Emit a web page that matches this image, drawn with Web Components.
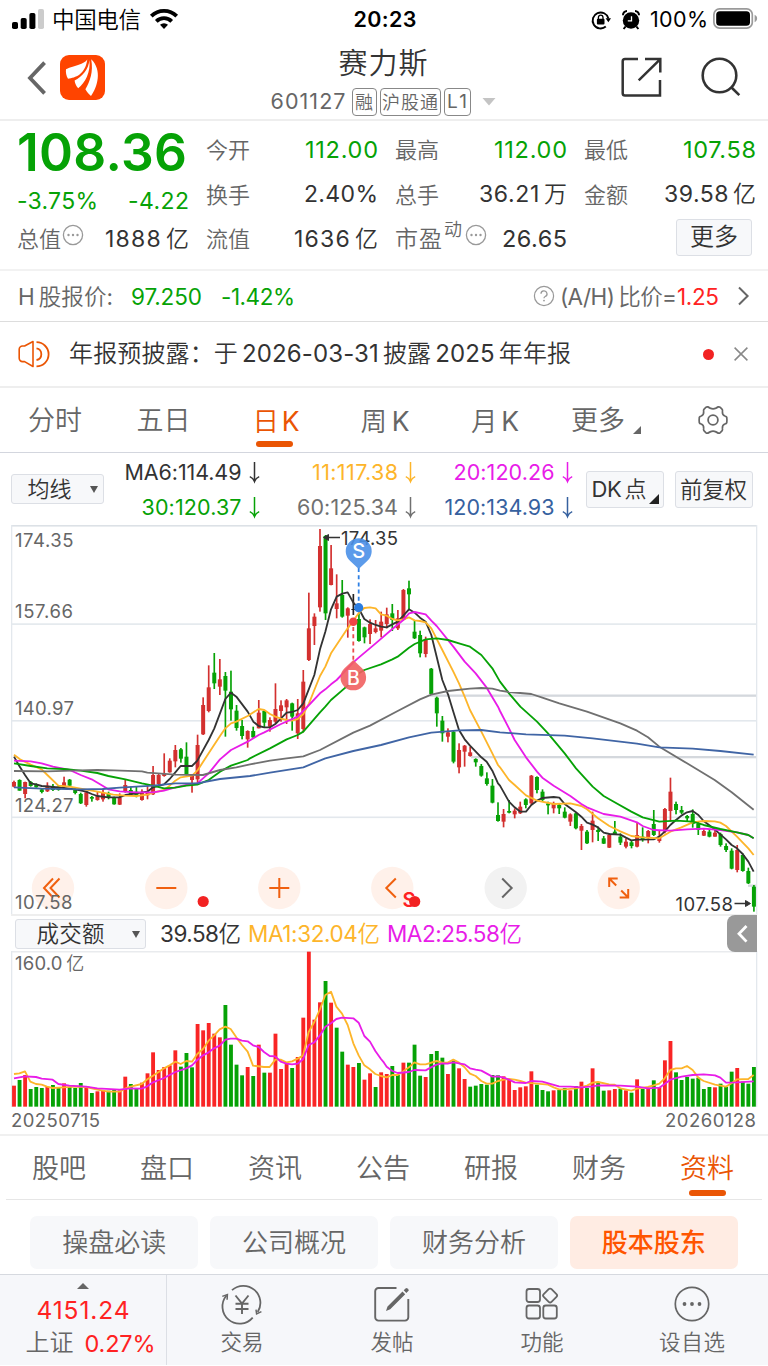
<!DOCTYPE html>
<html lang="zh-CN">
<head>
<meta charset="utf-8">
<title>赛力斯 601127</title>
<style>
  body {
    margin: 0;
    background: #fff;
    font-family: Inter, "Noto Sans CJK SC", sans-serif;
    color: #333;
  }
</style>
</head>
<body>
<stock-screen></stock-screen>

<script>
// One line of text, spaced out to a given width.
// Attributes: text, w (width in px), size, weight, gap (space between latin and han runs)
class FitText extends HTMLElement {
  constructor() {
    super();
    this.attachShadow({ mode: 'open' });
  }

  connectedCallback() {
    const size = this.getAttribute('size') || 22;
    const weight = this.getAttribute('weight') || 400;
    const gap = this.getAttribute('gap') || 0;
    const text = this.getAttribute('text');
    const runs = text.match(/[\u3000-\u9fff\uff00-\uffef]+|[^\u3000-\u9fff\uff00-\uffef]+/g);
    const han = weight > 400 ? weight : 350;
    const kind = r => /[\u3000-\u9fff]/.test(r) ? 'han' : /^[:=]/.test(r) ? 'tight' : 'latin';

    this.shadowRoot.innerHTML = `
      <style>
        :host {
          display: block;
          flex: none;
          line-height: 1.2;
          font-size: ${size}px;
          font-weight: ${weight};
        }
        .han { font-weight: ${han}; }
        span + span { margin-left: ${gap}px; }
        span + .tight { margin-left: 0; }
        b { display: inline-block; font-weight: inherit; white-space: pre; text-autospace: no-autospace; }
      </style>
      <b>${runs.map(r => `<span class="${kind(r)}">${r}</span>`).join('')}</b>
    `;

    const w = parseFloat(this.getAttribute('w'));
    if (w) {
      const natural = this.shadowRoot.querySelector('b').getBoundingClientRect().width;
      const spacing = (w - natural) / (text.length - 1 || 1);
      this.style.letterSpacing = spacing + 'px';
      this.style.width = w + 'px';
    }
  }
}
customElements.define('fit-text', FitText);


const ICONS = {
  signal: [32, 20, '<g><rect x="0" y="13" width="6" height="7" rx="1.8"/><rect x="8.7" y="9" width="6" height="11" rx="1.8"/><rect x="17.4" y="4" width="6" height="16" rx="1.8"/><rect x="26" y="0" width="6" height="20" rx="1.8" fill="#ccc"/></g>'],
  wifi: [28, 20, '<g fill="none" stroke="#000" stroke-width="3.8"><path d="M1.3 7.2a18 18 0 0 1 25.4 0"/><path d="M6.3 12.3a10.9 10.9 0 0 1 15.4 0"/></g><path d="M14 20l-4-4.2a5.8 5.8 0 0 1 8 0z"/>'],
  lock: [20, 20, '<path d="M14.8 16.6a8 8 0 1 1 2.6-8.2" fill="none" stroke="#000" stroke-width="1.9"/><path d="M14.6 8.3h5.4l-2.6 4z"/><rect x="5.9" y="8.8" width="7.6" height="5.6" rx="1"/><path d="M7.4 9V7.4a2.3 2.3 0 0 1 4.6 0V9" fill="none" stroke="#000" stroke-width="1.3"/>'],
  alarm: [18, 20, '<circle cx="9" cy="10.5" r="8.2"/><path d="M1 5.2A4 4 0 0 1 5 1M17 5.2A4 4 0 0 0 13 1" fill="none" stroke="#000" stroke-width="2"/><path d="M3.6 16.5L1.6 19M14.4 16.5l2 2.5" stroke="#000" stroke-width="2"/><path d="M9.5 6.2v4.7H5.8" fill="none" stroke="#fff" stroke-width="1.3"/>'],
  battery: [45, 21, '<rect x=".9" y=".9" width="38.4" height="19.2" rx="5.6" fill="none" stroke="#9a9a9a" stroke-width="1.7"/><rect x="3.2" y="3.2" width="33.8" height="14.6" rx="3.6"/><path d="M41.6 6.8c3.4 1.3 3.4 6 0 7.4z" fill="#9a9a9a"/>'],
  back: [20, 34, '<path d="M17.6 1.6L3 17l14.6 15.4" fill="none" stroke="#666" stroke-width="3.8"/>'],
  logo: [45, 45, '<rect width="45" height="45" rx="9" fill="#ff4400"/><g fill="#fff"><path d="M27.3 4.6C24 9.6 15 10.5 6 14.2C5.6 17.5 6.2 20.5 8 23.7C15.5 22.8 25 20 27.3 4.6z"/><path d="M29.3 5C29 14 22 21.5 14.6 25.6C15 28.6 16 31 18.2 33.3C25 28 31 17 29.3 5z"/><path d="M31.2 4.2C33.5 17 30 26 25.4 34.2C27 37 28.8 39 31 41C37.5 32 42.5 15 31.2 4.2z"/></g>'],
  share: [41, 41, '<g fill="none" stroke="#333" stroke-width="2.5"><path d="M17 2H4a2.3 2.3 0 0 0-2.3 2.3v32a2.3 2.3 0 0 0 2.3 2.3h35V23"/><path d="M24 2h15.3v13.5M38.8 2.6L17.7 23.4"/></g>'],
  search: [40, 40, '<g fill="none" stroke="#333" stroke-width="2.6"><circle cx="18.5" cy="18.5" r="16.8"/><path d="M30.5 30.5l7.8 7.6"/></g>'],
  caret: [14, 8, '<path d="M.5 0h13L7 7.5z" fill="#c4c4c4"/>'],
  info: [22, 22, '<circle cx="11" cy="11" r="9.6" fill="none" stroke="#999" stroke-width="1.3"/><g fill="#999"><circle cx="6.5" cy="11" r="1.2"/><circle cx="11" cy="11" r="1.2"/><circle cx="15.5" cy="11" r="1.2"/></g>'],
  help: [22, 22, '<circle cx="11" cy="11" r="9.6" fill="none" stroke="#999" stroke-width="1.2"/><path d="M8 8.8a3 2.9 0 1 1 4.2 2.7c-.9.4-1.2.9-1.2 1.8" fill="none" stroke="#999" stroke-width="1.3"/><circle cx="11" cy="15.6" r=".9" fill="#999"/>'],
  next: [14, 20, '<path d="M2 1.5l8.6 8.5L2 18.5" fill="none" stroke="#666" stroke-width="2"/>'],
  speaker: [32, 28, '<g fill="none" stroke="#ea5504" stroke-width="1.6" stroke-linejoin="round"><path d="M15 1.5L6.6 6H4.5a3.3 3.3 0 0 0-3.3 3.3v9a3.3 3.3 0 0 0 3.3 3.3h2.1L15 26.5z"/><path d="M18.5 2.2a12 12 0 0 1 0 24.2M18.5 8.4a5.9 5.9 0 0 1 0 11.6" stroke-width="1.8"/></g>'],
  close: [14, 14, '<path d="M.6.6l12.8 12.8M13.4.6L.6 13.4" stroke="#888" stroke-width="1.5"/>'],
  gear: [32, 30, '<g fill="none" stroke="#666" stroke-width="1.8"><circle cx="16" cy="15" r="4.9"/><path stroke-linejoin="round" transform="translate(1 .3) scale(.94 .98)" d="M10.5 1.6l2.4 1.3q3.1 1.5 6.2 0l2.4-1.3q1.2-.3 2.2.6l2 1.9q.6.9.3 2.3-.4 3.4 2.6 4.5 1.7.5 2 1.4.4 2.7 0 5.4-.3.9-2 1.4-3 1.1-2.6 4.5.3 1.4-.3 2.3l-2 1.9q-1 .9-2.2.6l-2.4-1.3q-3.1-1.5-6.2 0l-2.4 1.3q-1.2.3-2.2-.6l-2-1.9q-.6-.9-.3-2.3.4-3.4-2.6-4.5-1.7-.5-2-1.4-.4-2.7 0-5.4.3-.9 2-1.4 3-1.1 2.6-4.5-.3-1.4.3-2.3l2-1.9q1-.9 2.2-.6z"/></g>'],
  down: [11, 21, '<path d="M5.5 0v20M.8 14.6q3.4 1.4 4.7 5 1.3-3.6 4.7-5" fill="none" stroke="currentColor" stroke-width="1.5"/>'],
  trade: [42, 38, '<g fill="none" stroke="#666" stroke-width="1.8"><path d="M11 5.2A17 17 0 0 1 36.7 27"/><path d="M31.7 32.6A17 17 0 0 1 5.5 10.5"/><path d="M35 24.6l.6 4.3 4.8-2.3M1.3 11.4l5.1-1.9-.3 5.2" stroke-width="1.5"/><path d="M14.5 10.5l6.5 8 6.5-8M21 18.5v10.5M14.5 18.7h13M14.5 24h13" stroke-width="1.9"/></g>'],
  post: [38, 38, '<path d="M23.5 3H5.5A3.3 3.3 0 0 0 2.2 6.3v26a3.3 3.3 0 0 0 3.3 3.3h26.5a3.3 3.3 0 0 0 3.3-3.3V14" fill="none" stroke="#666" stroke-width="1.9"/><path d="M14.5 21.5L29.5 6.5l2.7 2.7-15 15-4.2 1.8zM30.7 5.3l2.4-2.2q2.7.2 2.7 2.5l-2.5 2.5z" fill="#666"/>'],
  apps: [34, 34, '<g fill="none" stroke="#666" stroke-width="1.8"><rect x="1.5" y="2" width="13.5" height="13" rx="2.5"/><rect x="1.5" y="18.5" width="13.5" height="13" rx="2.5"/><rect x="18.3" y="18.5" width="13.5" height="13" rx="2.5"/><rect x="19.6" y="3" width="11" height="11" rx="2" transform="rotate(45 25.1 8.5)"/></g>'],
  more: [38, 38, '<circle cx="19" cy="19" r="16.7" fill="none" stroke="#666" stroke-width="1.7"/><g fill="#666"><circle cx="11.5" cy="19" r="1.9"/><circle cx="19" cy="19" r="1.9"/><circle cx="26.5" cy="19" r="1.9"/></g>']
};

class UiIcon extends HTMLElement {
  constructor() {
    super();
    this.attachShadow({ mode: 'open' });
  }

  connectedCallback() {
    const [w, h, body] = ICONS[this.getAttribute('name')];
    this.shadowRoot.innerHTML = `
      <style>
        :host { display: block; flex: none; width: ${w}px; height: ${h}px; }
        svg { display: block; overflow: visible; }
      </style>
      <svg width="${w}" height="${h}" viewBox="0 0 ${w} ${h}">${body}</svg>
    `;
  }
}
customElements.define('ui-icon', UiIcon);


// Grey outlined button; corner="fold" or corner="drop" adds the menu triangle
class ChipButton extends HTMLElement {
  constructor() {
    super();
    this.attachShadow({ mode: 'open' });
    this.shadowRoot.innerHTML = `
      <style>
        :host {
          display: flex;
          flex: none;
          align-items: center;
          justify-content: center;
          position: relative;
          box-sizing: border-box;
          border: 1px solid #dcdfe5;
          border-radius: 3px;
          background: #f7f8fa;
          color: #333;
        }
        i { display: none; position: absolute; width: 0; height: 0; }
        :host([corner=drop]) i {
          display: block;
          right: 5px;
          top: 11px;
          border: 4.5px solid transparent;
          border-top: 7px solid #555;
          border-bottom: 0;
        }
        :host([corner=fold]) i {
          display: block;
          right: 4px;
          bottom: 3px;
          border-left: 10px solid transparent;
          border-bottom: 10px solid #222;
        }
      </style>
      <slot></slot><i></i>
    `;
  }
}
customElements.define('chip-button', ChipButton);


class StatusBar extends HTMLElement {
  constructor() {
    super();
    this.attachShadow({ mode: 'open' });
    this.shadowRoot.innerHTML = `
      <style>
        :host {
          display: grid;
          grid-template-columns: 1fr auto 1fr;
          align-items: center;
          height: 38px;
          padding: 2px 10px 0 12px;
          box-sizing: border-box;
          color: #000;
        }
        div { display: flex; align-items: center; }
        .right { justify-content: flex-end; }
      </style>
      <div>
        <ui-icon name="signal" style="margin-top:-2px"></ui-icon>
        <fit-text text="中国电信" w="89" size="22.5" style="margin:-1px 9px 0 8px"></fit-text>
        <ui-icon name="wifi" style="margin-top:-2px"></ui-icon>
      </div>
      <fit-text text="20:23" w="63" size="21.5" weight="600"></fit-text>
      <div class="right">
        <ui-icon name="lock"></ui-icon>
        <ui-icon name="alarm" style="margin:0 10px 0 11px"></ui-icon>
        <fit-text text="100%" w="58" size="21.5" style="margin-right:5px"></fit-text>
        <ui-icon name="battery" style="margin-top:-2px"></ui-icon>
      </div>
    `;
  }
}
customElements.define('status-bar', StatusBar);


class StockHeader extends HTMLElement {
  constructor() {
    super();
    this.attachShadow({ mode: 'open' });
    this.shadowRoot.innerHTML = `
      <style>
        :host {
          display: grid;
          grid-template-columns: 1fr auto 1fr;
          height: 83px;
          box-sizing: border-box;
          border-bottom: 2px solid #eee;
        }
        .left, .right, .sub { display: flex; align-items: center; }
        .left { padding: 0 0 2px 27px; gap: 13px; }
        .right { justify-content: flex-end; gap: 39px; padding: 0 27px 3px 0; }
        .mid { display: flex; flex-direction: column; align-items: center; padding: 9px 2px 0 0; }
        .sub { color: #666; margin-top: 6px; height: 29px; }
        .tag {
          display: flex;
          align-items: center;
          justify-content: center;
          height: 28px;
          box-sizing: border-box;
          border: 1px solid #888;
          border-radius: 4px;
          margin-left: 3px;
        }
      </style>
      <div class="left">
        <ui-icon name="back"></ui-icon>
        <ui-icon name="logo"></ui-icon>
      </div>
      <div class="mid">
        <fit-text text="赛力斯" w="89" size="29"></fit-text>
        <div class="sub">
          <fit-text text="601127" w="75" size="21.5"></fit-text>
          <div class="tag" style="width:25px;margin-left:6px"><fit-text text="融" size="18"></fit-text></div>
          <div class="tag" style="width:61px"><fit-text text="沪股通" w="56" size="18"></fit-text></div>
          <div class="tag" style="width:27px"><fit-text text="L1" w="20" size="19"></fit-text></div>
          <ui-icon name="caret" style="margin-left:11px"></ui-icon>
        </div>
      </div>
      <div class="right">
        <ui-icon name="share"></ui-icon>
        <ui-icon name="search"></ui-icon>
      </div>
    `;
  }
}
customElements.define('stock-header', StockHeader);


class QuotePanel extends HTMLElement {
  constructor() {
    super();
    this.attachShadow({ mode: 'open' });
    this.shadowRoot.innerHTML = `
      <style>
        :host {
          display: flex;
          height: 150px;
          box-sizing: border-box;
          border-bottom: 2px solid #f2f2f2;
          padding: 7px 12px 0 17px;
          --down: #06a206;
        }
        .main { width: 172px; margin-right: 17px; display: grid; grid-template-rows: 50px 47px 29px; }
        .grid { display: grid; grid-template-columns: repeat(3, 172px); grid-template-rows: 44px 46px 43px; column-gap: 17px; }
        .cell, .main > div { display: flex; align-items: center; justify-content: space-between; }
        .cell > :first-child, .label { color: #666; }
        .cell > .green, .green { color: var(--down); }
        .pair { display: flex; align-items: center; }
      </style>
      <div class="main">
        <div class="green"><fit-text text="108.36" w="170" size="51.5" weight="600"></fit-text></div>
        <div class="green">
          <fit-text text="-3.75%" w="81" size="23"></fit-text>
          <fit-text text="-4.22" w="61" size="23"></fit-text>
        </div>
        <div>
          <span class="pair label"><fit-text text="总值" w="44" size="22"></fit-text><ui-icon name="info" style="margin:-9px 0 0 1px"></ui-icon></span>
          <fit-text text="1888亿" w="84" size="23" gap="4"></fit-text>
        </div>
      </div>
      <div class="grid">
        <div class="cell"><fit-text text="今开" w="44" size="22"></fit-text><fit-text class="green" text="112.00" w="73" size="23.5"></fit-text></div>
        <div class="cell"><fit-text text="最高" w="44" size="22"></fit-text><fit-text class="green" text="112.00" w="73" size="23.5"></fit-text></div>
        <div class="cell"><fit-text text="最低" w="44" size="22"></fit-text><fit-text class="green" text="107.58" w="73" size="23.5"></fit-text></div>
        <div class="cell"><fit-text text="换手" w="44" size="22"></fit-text><fit-text text="2.40%" w="74" size="23"></fit-text></div>
        <div class="cell"><fit-text text="总手" w="44" size="22"></fit-text><fit-text text="36.21万" w="88" size="23" gap="4"></fit-text></div>
        <div class="cell"><fit-text text="金额" w="44" size="22"></fit-text><fit-text text="39.58亿" w="92" size="23" gap="4"></fit-text></div>
        <div class="cell"><fit-text text="流值" w="44" size="22"></fit-text><fit-text text="1636亿" w="84" size="23" gap="4"></fit-text></div>
        <div class="cell">
          <span class="pair">
            <fit-text text="市盈" w="47" size="23"></fit-text>
            <fit-text text="动" size="18" style="margin:-20px 0 0 2px"></fit-text>
            <ui-icon name="info" style="margin:-9px 0 0 3px"></ui-icon>
          </span>
          <fit-text text="26.65" w="65" size="23.5"></fit-text>
        </div>
        <div class="cell" style="justify-content:flex-end">
          <chip-button style="width:76px;height:37px;margin:-5px 4px 0 0;color:#333"><fit-text text="更多" w="48" size="24"></fit-text></chip-button>
        </div>
      </div>
    `;
  }
}
customElements.define('quote-panel', QuotePanel);


class HShareRow extends HTMLElement {
  constructor() {
    super();
    this.attachShadow({ mode: 'open' });
    this.shadowRoot.innerHTML = `
      <style>
        :host {
          display: flex;
          align-items: center;
          height: 51px;
          box-sizing: border-box;
          border-bottom: 1px solid #ddd;
          padding: 0 17px 0 18px;
          color: #666;
        }
        .green { color: #06a206; }
        .red { color: #f22; }
      </style>
      <fit-text text="H股报价:" w="95" size="22.5" gap="4"></fit-text>
      <fit-text class="green" text="97.250" w="71" size="22.5" style="margin-left:18px"></fit-text>
      <fit-text class="green" text="-1.42%" w="74" size="22.5" style="margin-left:19px"></fit-text>
      <ui-icon name="help" style="margin-left:auto"></ui-icon>
      <fit-text text="(A/H)比价=" w="117" size="22.5" gap="4" style="margin-left:5px"></fit-text>
      <fit-text class="red" text="1.25" w="42" size="22.5"></fit-text>
      <ui-icon name="next" style="margin-left:18px"></ui-icon>
    `;
  }
}
customElements.define('h-share-row', HShareRow);


class NoticeRow extends HTMLElement {
  constructor() {
    super();
    this.attachShadow({ mode: 'open' });
    this.shadowRoot.innerHTML = `
      <style>
        :host {
          display: flex;
          align-items: center;
          height: 66px;
          box-sizing: border-box;
          border-bottom: 2px solid #eee;
          padding: 0 20px 0 18px;
        }
        .dot { width: 11px; height: 11px; border-radius: 50%; background: #f22222; margin: 0 20px 0 auto; }
      </style>
      <ui-icon name="speaker"></ui-icon>
      <fit-text text="年报预披露：于2026-03-31披露2025年年报" w="502" size="24" gap="4" style="margin-left:19px"></fit-text>
      <span class="dot"></span>
      <ui-icon name="close"></ui-icon>
    `;
  }
}
customElements.define('notice-row', NoticeRow);


class TabItem extends HTMLElement {
  constructor() {
    super();
    this.attachShadow({ mode: 'open' });
    this.shadowRoot.innerHTML = `
      <style>
        :host {
          display: flex;
          align-items: center;
          justify-content: center;
          position: relative;
          box-sizing: border-box;
          padding-top: 3px;
          color: #666;
        }
        :host([active]) { color: #ea5504; }
        :host([active])::after {
          content: '';
          position: absolute;
          left: 50%;
          bottom: var(--bar-bottom, 5px);
          width: 37px;
          height: 6px;
          margin-left: -19px;
          border-radius: 3px;
          background: #ea5504;
        }
      </style>
      <slot></slot>
    `;
  }
}
customElements.define('tab-item', TabItem);


class PeriodTabs extends HTMLElement {
  constructor() {
    super();
    this.attachShadow({ mode: 'open' });
    this.shadowRoot.innerHTML = `
      <style>
        :host {
          display: grid;
          grid-template-columns: repeat(5, 110px) 106px 112px;
          height: 65px;
          box-sizing: border-box;
          border-bottom: 1px solid #d3d6de;
        }
        i { border-left: 8px solid transparent; border-bottom: 8px solid #666; margin: 16px 0 0 8px; }
      </style>
      <tab-item><fit-text text="分时" w="54" size="27"></fit-text></tab-item>
      <tab-item style="padding-right:3px"><fit-text text="五日" w="54" size="27"></fit-text></tab-item>
      <tab-item active><fit-text text="日K" w="47" size="26.5" gap="2" style="margin-left:2px"></fit-text></tab-item>
      <tab-item><fit-text text="周K" w="49" size="26.5" gap="3"></fit-text></tab-item>
      <tab-item><fit-text text="月K" w="48" size="26.5" gap="3"></fit-text></tab-item>
      <tab-item style="padding-left:6px"><fit-text text="更多" w="54" size="27"></fit-text><i></i></tab-item>
      <tab-item style="padding:0 0 1px 2px"><ui-icon name="gear"></ui-icon></tab-item>
    `;
  }
}
customElements.define('period-tabs', PeriodTabs);


class MaLegend extends HTMLElement {
  constructor() {
    super();
    this.attachShadow({ mode: 'open' });
    const items = [
      ['MA6:114.49', 117, '#333'], ['11:117.38', 86, '#fdb52a'], ['20:120.26', 101, '#e81ce8'],
      ['30:120.37', 100, '#06a206'], ['60:125.34', 101, '#707070'], ['120:134.93', 110, '#36619f']
    ];
    this.shadowRoot.innerHTML = `
      <style>
        :host { display: flex; height: 67px; padding: 0 11px; box-sizing: border-box; }
        .values {
          display: grid;
          grid-template-columns: repeat(3, 156.5px);
          grid-auto-rows: 35px;
          margin: 2px 13px 0 -1px;
        }
        .values div { display: flex; align-items: center; justify-content: flex-end; gap: 7px; }
      </style>
      <chip-button corner="drop" style="width:93px;height:30px;margin-top:21px;padding-right:16px"><fit-text text="均线" w="44" size="22"></fit-text></chip-button>
      <div class="values">
        ${items.map(([text, w, color]) => `<div style="color:${color}"><fit-text text="${text}" w="${w}" size="21.5"></fit-text><ui-icon name="down"></ui-icon></div>`).join('')}
      </div>
      <chip-button corner="fold" style="width:78px;height:37px;margin-top:18px;padding-right:13px"><fit-text text="DK点" w="55" size="22" gap="3" style="margin-left:2px"></fit-text></chip-button>
      <chip-button style="width:78px;height:37px;margin:18px 0 0 11px"><fit-text text="前复权" w="67" size="22.5"></fit-text></chip-button>
    `;
  }
}
customElements.define('ma-legend', MaLegend);


// Both charts are drawn in thirds of a pixel
const STEP = 16.69;
const FIRST = 42;
const RED = '#d3302f';
const GREEN = '#06a206';

// chunks: [x offset, 'x,y x,y ...']
function line(color, chunks) {
  const points = chunks.map(([dx, pts]) => pts.split(' ').map(p => {
    const [x, y] = p.split(',');
    return (+x + dx) + ',' + y;
  }).join(' ')).join(' ');
  return `<polyline points="${points}" fill="none" stroke="${color}" stroke-width="5.5" stroke-linejoin="round"/>`;
}

// colour, wick top, wick bottom, body top, body bottom
const CANDLES = `r 782 802 786 800|g 778 812 780 812|r 785 835 786 822|g 783 800 786 798|g 790 803 793 802|g 805 820 808 816
r 787 816 797 814|g 792 813 800 810|g 795 812 800 810|r 770 802 787 800|g 777 800 779 797|g 803 823 806 819
g 818 852 822 850|r 813 860 817 855|g 828 845 831 836|r 815 842 828 840|r 805 845 818 838|g 815 838 820 832
g 830 854 833 853|r 820 855 833 854|r 778 818 795 816|g 800 824 810 822|g 800 832 815 826|r 808 842 818 840
r 797 838 818 826|r 738 825 765 823|r 760 797 765 792|r 700 770 762 768|r 715 758 722 757|r 675 742 690 724
g 684 728 688 716|g 667 766 710 764|r 765 818 768 780|r 644 790 675 778|r 532 645 555 643|r 436 577 502 573
g 399 507 458 490|r 417 525 478 500|g 456 650 468 512|g 452 602 515 568|g 555 632 572 624|g 600 658 618 648
r 631 683 633 658|g 620 655 633 652|r 540 625 578 625|g 570 622 573 608|r 592 635 600 620|r 490 610 567 605
r 541 605 556 573|r 537 612 541 562|g 548 632 550 590|r 537 657 580 640|r 450 637 485 627|r 218 423 325 420
r 280 375 290 318|r 27 275 78 262|g 45 300 48 280|r 75 196 145 195|r 163 295 250 267|g 180 293 225 290
r 262 353 265 287|k 222 285 267 270|g 280 365 297 363|g 320 370 322 352|r 298 372 312 342|r 300 340 325 336
r 275 352 305 332|r 263 325 283 312|g 252 333 280 300|r 270 330 295 325|r 207 302 210 300|g 182 268 205 223
g 300 357 335 355|g 332 412 345 400|r 350 412 358 402|g 444 524 446 522|g 530 620 533 580|g 588 665 602 640
r 625 667 637 650|g 632 730 635 725|r 670 760 690 742|r 675 740 677 695|r 680 710 697 708|g 715 740 717 727
g 732 770 738 767|g 757 797 775 792|g 777 850 797 848|g 847 905 885 903|r 867 922 882 905|g 840 880 873 878
r 865 895 872 883|r 845 882 860 880|g 835 865 838 855|r 765 855 767 850|g 769 820 771 810|g 808 845 815 840
g 845 883 850 856|r 845 880 850 865|g 850 882 855 865|g 862 895 875 893|r 880 918 883 905|g 878 928 880 925
r 912 990 918 932|g 930 972 935 970|r 875 967 902 930|g 920 963 930 936|g 948 972 955 971|r 940 984 945 983
g 903 945 935 942|g 940 975 950 968|r 955 985 965 980|g 962 985 967 978|r 908 982 945 980|g 922 965 950 957
r 930 970 933 955|g 870 948 912 945|r 930 968 950 963|r 864 940 867 935|r 773 905 815 873|g 845 883 852 870
g 858 882 870 878|g 885 905 888 895|g 868 923 882 912|g 905 945 912 930|r 928 948 933 947|g 928 952 935 950
r 925 950 938 950|g 938 980 942 975|g 970 996 978 990|g 985 1048 992 1046|r 975 1057 990 1050|g 1000 1055 1005 1053
g 1043 1092 1053 1090|g 1095 1175 1100 1160`.split(/[|\n]/);

const MA_LINES = [
  ['#333', [
    [0, '42,710 58,738 75,765 92,790 108,793 125,798 159,801 192,804 225,808 259,815 275,822 292,828 325,832 359,832 376,825 409,820 442,815 459,802 492,793 509,777 526,757 542,738 576,738 592,722 626,660 643,625 660,580 676,537 693,518 709,530 743,575 760,605'],
    [750, '26,618 43,622 60,622 76,612 93,595 110,578 126,576 143,570 160,550 193,465 210,388 226,335 243,268 260,230 277,221 293,217 310,248 327,267 343,297 360,308 377,315 393,320 410,322 427,313 443,305 460,287 477,268 494,278 510,293 527,305 544,345 560,410 577,480 594,523 610,575 627,630 644,658 660,677 694,712 710,725 727,752 744,790'],
    [1500, '0,797 27,845 44,862 61,875 78,875 94,855 111,842 127,834 161,831 178,833 194,852 228,877 244,890 261,908 278,914 294,922 311,938 328,942 361,944 378,953 394,961 411,959 461,958 478,950 494,935 511,915 528,900 544,887 561,877 578,873 594,884 611,903 644,928 678,958 695,975 711,985 728,1002 745,1025 761,1055']
  ]],
  ['#fdb52a', [
    [0, '42,704 60,718 92,734 125,748 142,765 175,797 209,800 242,806 292,815 340,824 376,827 409,828 442,824 459,818 492,810 509,797 526,782 542,772 576,767 592,752 626,700 660,648 676,625 693,610 709,605 743,588'],
    [750, '26,567 43,570 60,582 76,590 93,596 110,600 126,602 143,597 160,582 177,550 193,510 210,468 226,440 243,400 293,325 310,302 327,278 343,264 360,262 377,265 393,283 410,287 427,297 443,301 460,298 477,292 494,301 510,303 527,307 544,325 577,390 610,455 627,490 644,530 660,570 694,635 727,700 744,735'],
    [1500, '0,742 27,780 44,795 78,826 111,842 161,852 211,850 244,858 261,868 294,895 328,918 361,934 394,948 428,952 478,955 511,935 544,922 578,907 611,903 644,904 661,908 678,918 711,950 745,985 761,1005']
  ]],
  ['#e81ce8', [
    [0, '42,722 92,724 125,730 159,740 209,750 242,765 275,778 309,798 325,808 359,814 409,817 459,817 492,812 526,802 559,795 592,790 626,760 660,718 693,690 743,665'],
    [750, '26,645 43,637 93,612 143,590 177,555 210,520 226,508 243,493 260,480 310,427 327,412 377,370 427,327 460,300 477,280 494,276 527,283 544,302 560,318 610,380 644,425 677,460 710,503 744,560'],
    [1500, '0,573 27,625 44,660 78,712 111,755 127,773 161,797 211,828 244,852 261,862 311,882 361,890 411,907 428,918 461,930 511,932 561,928 611,926 661,930 711,937 745,945 761,955']
  ]],
  ['#06a206', [
    [0, '42,730 92,738 142,745 192,747 242,752 292,759 325,768 376,778 426,790 459,797 492,805 526,803 559,797 592,794 626,780 660,755 693,737 743,720'],
    [750, '0,715 60,685 110,658 143,645 160,635 210,577 226,560 243,540 293,497 327,460 343,450 393,433 427,418 443,410 477,383 494,372 527,358 560,355 594,360 627,370 660,380 694,405 727,445'],
    [1500, '0,485 27,520 61,560 111,605 144,640 194,700 228,745 278,800 311,828 344,847 394,875 428,892 478,905 528,902 578,905 611,915 661,927 711,937 745,945 761,955']
  ]],
  ['#707070', [
    [0, '42,753 142,754 242,751 292,750 342,751 426,754 442,758 526,764 609,765 660,750 709,742'],
    [750, '0,733 60,722 110,715 160,709 210,690 310,638 360,617 443,573 510,538 544,524 594,513 660,506 694,504 727,506'],
    [1500, '0,512 27,516 94,522 127,533 178,550 261,575 361,610 411,632 444,652 478,680 561,730 644,780 695,817 761,869']
  ]],
  ['#4065a5', [
    [0, '42,802 125,806 242,808 309,807 359,803 459,797 526,790 592,790 660,777'],
    [750, '0,768 60,758 160,742 226,715 310,693 393,675 477,652 544,638 627,631 694,630'],
    [1500, '0,637 78,643 194,647 278,655 411,671 478,682 578,686 661,693 761,704']
  ]]
];

class KChart extends HTMLElement {
  constructor() {
    super();
    this.attachShadow({ mode: 'open' });
    this.shadowRoot.innerHTML = `
      <style>
        :host { display: block; height: 396px; }
        svg { display: block; }
        text { font-size: 18.5px; fill: #666; }
        .mark { fill: #333; }
        .btn { fill: none; stroke: #f0600f; stroke-width: 2; }
      </style>
      <svg width="768" height="396" viewBox="0 0 768 396">
        <g fill="#e3e8ed">
          <rect x="11" y="5" width="746" height="1.6" fill="#dce1e6"/>
          <rect x="11" y="5" width="1.3" height="390"/>
          <rect x="756" y="5" width="1.3" height="390"/>
          <rect x="11" y="103.3" width="746" height="1.6"/>
          <rect x="11" y="200" width="746" height="1.6"/>
          <rect x="11" y="296.5" width="746" height="1.6"/>
          <rect x="11" y="394" width="746" height="2" fill="#eee"/>
        </g>
        <g fill="#d4d8dd">
          <rect x="430" y="174.5" width="326" height="2.3"/>
          <rect x="471" y="236" width="285" height="2.3"/>
          <rect x="748" y="364.5" width="8" height="2.3"/>
        </g>
        ${this.tools()}
        <g transform="scale(.33333)">
          ${this.candles()}
          ${MA_LINES.map(([c, chunks]) => line(c, chunks)).join('')}
        </g>
        <text x="15" y="26.5" textLength="58.5">174.35</text>
        <text x="15" y="97.5" textLength="58">157.66</text>
        <text x="15" y="194.5" textLength="59">140.97</text>
        <text x="15" y="292" textLength="58.5">124.27</text>
        <text x="15" y="389" textLength="57.5">107.58</text>
        <g stroke="#333" stroke-width="1.6">
          <path d="M325 17.5h15M734.5 383.5h14"/>
          <path d="M323.5 17.5l5-3v6zM750.5 383.5l-5-3v6z" fill="#333" stroke-width="1"/>
        </g>
        <text class="mark" x="341" y="24.5" textLength="57">174.35</text>
        <text class="mark" x="675.5" y="390.5" textLength="57.5">107.58</text>
        ${this.pins()}
        <text x="402.5" y="386.5" style="font-size:20px;font-weight:600;fill:#f22">S</text>
        <circle cx="414.7" cy="381.5" r="5.6" fill="#f22222"/>
        <circle cx="203.2" cy="381.5" r="5.6" fill="#f22222"/>
      </svg>
    `;
  }

  candles() {
    return CANDLES.map((row, i) => {
      const [kind, top, bottom, open, close] = row.split(' ');
      const fill = { r: RED, g: GREEN, k: '#222' }[kind];
      const x = FIRST + STEP * i;
      return `<rect x="${x - 2.5}" y="${top}" width="5" height="${bottom - top}" fill="${fill}"/>
        <rect x="${x - 6}" y="${open}" width="12" height="${close - open}" fill="${fill}"/>`;
    }).join('');
  }

  tools() {
    const glyphs = [
      [53, 'M0 -9.5l-9 9.5 9 9.5M6.5 -9.5l-9 9.5 9 9.5'],
      [166.3, 'M-10 0h20'],
      [279.3, 'M-10 0h20M0 -10v20'],
      [392.3, 'M3.5 -9.5l-9.5 9.5 9.5 9.5'],
      [505.7, 'M-3.5 -9.5l9.5 9.5 -9.5 9.5'],
      [618.7, 'M-9.5 -1v-8.5h8.5M-9.5 -9.5l7 7M9.5 1v8.5h-8.5M9.5 9.5l-7 -7']
    ];
    return glyphs.map(([x, d]) => {
      const grey = x === 505.7;
      return `<g transform="translate(${x} 368)">
        <circle r="21.2" fill="${grey ? '#f2f2f2' : '#fff1ea'}"/>
        <path class="btn" d="${d}"${grey ? ' style="stroke:#666"' : ''}/>
      </g>`;
    }).join('');
  }

  // sell and buy markers
  pins() {
    return `
      <g text-anchor="middle" fill-opacity=".9">
        <path d="M358.7 48v36" stroke="#2f80e4" stroke-width="1.8" stroke-dasharray="4 3.2"/>
        <path d="M358.7 49l-8.5-8a13 13 0 1 1 17 0z" fill="#4a90e8"/>
        <circle cx="358.7" cy="87.7" r="4.6" fill="#2b7de1" fill-opacity="1"/>
        <path d="M353.3 107v34" stroke="#ea4b4b" stroke-width="1.8" stroke-dasharray="4 3.2"/>
        <path d="M353.3 140l-8.5 8a12.8 12.8 0 1 0 17 0z" fill="#f16161"/>
        <circle cx="353.3" cy="101.8" r="4.3" fill="#f04545" fill-opacity="1"/>
        <text x="358.7" y="38" style="fill:#fff;font-weight:500;fill-opacity:1;font-size:20px">S</text>
        <text x="353.3" y="165" style="fill:#fff;font-weight:500;fill-opacity:1;font-size:19.5px">B</text>
      </g>`;
  }
}
customElements.define('k-chart', KChart);


class TurnoverBar extends HTMLElement {
  constructor() {
    super();
    this.attachShadow({ mode: 'open' });
    this.shadowRoot.innerHTML = `
      <style>
        :host { display: flex; align-items: center; height: 35px; padding: 0 11px 0 15px; }
        .fold {
          width: 30px;
          height: 37px;
          margin: -1px 0 -1px auto;
          border-radius: 8px 0 0 8px;
          background: #999;
          z-index: 1;
        }
        svg { display: block; }
      </style>
      <chip-button corner="drop" style="width:131px;height:30px;padding-right:20px"><fit-text text="成交额" w="68" size="22.5"></fit-text></chip-button>
      <fit-text text="39.58亿" w="81" size="22.5" style="margin-left:14px"></fit-text>
      <fit-text text="MA1:32.04亿" w="132" size="22.5" style="margin-left:7px;color:#fdb52a"></fit-text>
      <fit-text text="MA2:25.58亿" w="135" size="22.5" style="margin-left:7px;color:#e81ce8"></fit-text>
      <div class="fold">
        <svg width="30" height="37"><path d="M19.5 11l-7.5 7.8 7.5 7.8" fill="none" stroke="#fff" stroke-width="2.8"/></svg>
      </div>
    `;
  }
}
customElements.define('turnover-bar', TurnoverBar);


// colour and top edge of each bar, the bottom edge is 590
const TURNOVER = `r527 g510 r495 g537 g531 g534 r531 g525 g534 r520 g531 g534 g519 r528 g549 r544 r541 g542 g540 r541 r500 g522 g536
r518 r490 r427 r480 r471 r466 r421 g470 g429 g472 r342 r361 r339 r371 r382 g285 g404 g464 g496 r471 g498 r404 g488 r488 r371 r477
r461 g474 r441 r323 r125 r329 r277 g213 r278 g353 g425 r464 r471 g459 r509 r490 g531 r487 r492 g468 g495 r458 g458 g404 g497 r501
g432 g423 g443 r492 g452 r475 r507 g530 g527 g522 g524 g495 g496 r499 r510 r540 r532 r529 r484 g524 g540 g544 r541 g540 g534 r541
g528 r515 g534 r475 g517 g542 r541 r537 g536 r541 g548 r508 g537 r535 g511 r531 r451 r393 g487 g510 g501 g506 g503 g537 g531 r532
g521 g531 g485 r474 g515 g521 g471`.split(/\s+/);

const TURNOVER_LINES = [
  ['#fdb52a', [
    [0, '42,492 58,490 75,484 91,515 108,522 125,524 141,530 158,534 191,532 225,530 258,531 292,539 325,545 359,545 375,536 392,530 425,522 442,508 459,497 476,486 492,475 509,466 526,455 542,462 559,453 576,455 592,432 609,417 626,392 642,377 659,358 676,350 692,357 709,382 726,405 743,425 759,467 792,471 809,471 826,449 842,449 859,457 876,454 893,446 909,437 926,366 943,336 959,300 976,255 993,245 1009,290 1026,311 1043,345 1060,400 1076,436 1093,466 1110,478 1126,492 1143,498'],
    [1152, '8,502 25,495 41,495 58,484 75,472 91,457 108,463 125,463 158,453 175,458 191,458 208,449 225,458 241,471 258,491 275,498 292,513 308,521 325,521 342,513 359,509 375,507 392,509 409,513 425,518 459,521 492,524 509,532 525,538 542,538 576,535 609,527 626,518 642,516 675,523 692,524 709,535 742,542 759,536 792,531 809,526 826,521 842,505 859,480 876,475 893,475 909,468 926,480 943,503 959,513 993,524 1026,530 1043,520 1059,508 1093,507 1109,495']
  ]],
  ['#e81ce8', [
    [0, '42,505 75,499 108,501 125,506 158,509 175,522 208,527 258,530 292,535 359,539 392,535 425,536 442,529 459,517 492,504 526,486 559,475 576,466 592,450 609,436 626,427 642,415 659,407 676,389 692,386 709,386 726,392 743,394 759,406 776,411 792,426 809,438 826,439 842,455 859,461 876,463 893,461 909,448 926,405 943,397 959,377 976,350 993,340 1009,327 1026,323 1060,325 1076,338 1093,378 1110,395 1126,423 1143,447'],
    [1152, '0,458 8,470 25,483 41,489 75,486 91,480 125,481 141,472 158,464 175,460 191,461 208,457 225,460 241,463 258,475 275,479 292,482 325,500 342,499 359,503 375,509 392,517 425,519 442,513 475,515 525,529 559,530 592,532 626,529 642,526 709,527 759,530 792,535 826,533 842,522 859,509 893,500 926,495 959,493 993,496 1009,503 1026,518 1059,517 1109,514']
  ]]
];

class TurnoverChart extends HTMLElement {
  constructor() {
    super();
    this.attachShadow({ mode: 'open' });
    const bars = TURNOVER.map((v, i) => {
      const top = +v.slice(1);
      return `<rect x="${FIRST + STEP * i - 5.8}" y="${top}" width="11.6" height="${590 - top}" fill="${v[0] === 'r' ? '#f92525' : '#06a206'}"/>`;
    }).join('');
    this.shadowRoot.innerHTML = `
      <style>
        :host { display: block; height: 185px; }
        svg { display: block; }
        text { font-size: 18.5px; fill: #666; }
        .han { font-weight: 350; font-size: 18px; }
      </style>
      <svg width="768" height="185" viewBox="0 0 768 185">
        <rect x="11" y="0" width="746" height="1.5" fill="#e9ebee"/>
        <rect x="11" y="0" width="1.3" height="156" fill="#e3e8ed"/>
        <rect x="756" y="0" width="1.3" height="156" fill="#e3e8ed"/>
        <rect x="0" y="183" width="768" height="2" fill="#f0f0f0"/>
        <text x="15" y="19"><tspan textLength="47.5">160.0</tspan><tspan class="han" dx="3.5">亿</tspan></text>
        <g transform="translate(0 -41) scale(.33333)">
          ${bars}
          ${TURNOVER_LINES.map(([c, chunks]) => line(c, chunks)).join('')}
        </g>
        <text x="11" y="175.8" textLength="89">20250715</text>
        <text x="665" y="175.8" textLength="91">20260128</text>
      </svg>
    `;
  }
}
customElements.define('turnover-chart', TurnoverChart);


class SectionTabs extends HTMLElement {
  constructor() {
    super();
    this.attachShadow({ mode: 'open' });
    const names = ['股吧', '盘口', '资讯', '公告', '研报', '财务', '资料'];
    this.shadowRoot.innerHTML = `
      <style>
        :host {
          display: grid;
          grid-template-columns: repeat(7, 108px);
          height: 64px;
          margin: 0 6px;
          box-sizing: border-box;
          border-bottom: 1px solid #e6e6e6;
          --bar-bottom: 3px;
        }
        fit-text { margin-left: -2px; }
      </style>
      ${names.map((n, i) => `<tab-item${i === 6 ? ' active' : ''}><fit-text text="${n}" w="54" size="27"></fit-text></tab-item>`).join('')}
    `;
  }
}
customElements.define('section-tabs', SectionTabs);


class TopicChips extends HTMLElement {
  constructor() {
    super();
    this.attachShadow({ mode: 'open' });
    this.shadowRoot.innerHTML = `
      <style>
        :host {
          display: grid;
          grid-template-columns: repeat(4, 167.5px);
          column-gap: 12.4px;
          height: 74px;
          box-sizing: border-box;
          padding: 16px 0 5px 30.4px;
        }
        div {
          display: flex;
          align-items: center;
          justify-content: center;
          border-radius: 7px;
          background: #f7f8fa;
          color: #666;
        }
        .on { background: #ffece3; color: #ff5500; }
      </style>
      <div><fit-text text="操盘必读" w="104" size="26"></fit-text></div>
      <div><fit-text text="公司概况" w="104" size="26"></fit-text></div>
      <div><fit-text text="财务分析" w="104" size="26"></fit-text></div>
      <div class="on"><fit-text text="股本股东" w="104" size="26" weight="500"></fit-text></div>
    `;
  }
}
customElements.define('topic-chips', TopicChips);


class BottomBar extends HTMLElement {
  constructor() {
    super();
    this.attachShadow({ mode: 'open' });
    this.shadowRoot.innerHTML = `
      <style>
        :host {
          display: grid;
          grid-template-columns: 167px repeat(4, 150px);
          height: 91px;
          box-sizing: border-box;
          border-top: 1px solid #d6d9df;
          background: #f6f7fa;
          color: #666;
        }
        .index {
          display: flex;
          flex-direction: column;
          align-items: center;
          border-right: 1px solid #dcdfe5;
        }
        .index i {
          border: 6.5px solid transparent;
          border-top: 0;
          border-bottom: 6.5px solid #666;
          margin: 8px 0 7px;
        }
        .red { color: #f22; }
        .row { display: flex; align-items: center; gap: 11px; margin-left: 15px; height: 37px; }
        .item { display: flex; flex-direction: column; align-items: center; padding-top: 10px; }
        .box { display: flex; align-items: center; height: 38px; margin-bottom: 7px; }
      </style>
      <div class="index">
        <i></i>
        <fit-text class="red" text="4151.24" w="93" size="24.5"></fit-text>
        <div class="row"><fit-text text="上证" w="48" size="24"></fit-text><fit-text class="red" text="0.27%" w="71" size="23.5"></fit-text></div>
      </div>
      <div class="item"><div class="box"><ui-icon name="trade"></ui-icon></div><fit-text text="交易" w="43" size="21.5"></fit-text></div>
      <div class="item"><div class="box"><ui-icon name="post"></ui-icon></div><fit-text text="发帖" w="43" size="21.5"></fit-text></div>
      <div class="item"><div class="box"><ui-icon name="apps"></ui-icon></div><fit-text text="功能" w="43" size="21.5"></fit-text></div>
      <div class="item"><div class="box"><ui-icon name="more"></ui-icon></div><fit-text text="设自选" w="66" size="21.5"></fit-text></div>
    `;
  }
}
customElements.define('bottom-bar', BottomBar);


class StockScreen extends HTMLElement {
  constructor() {
    super();
    this.attachShadow({ mode: 'open' });
    this.shadowRoot.innerHTML = `
      <style>
        :host { display: flex; flex-direction: column; width: 768px; height: 1366px; overflow: hidden; }
        :host > * { flex: none; }
      </style>
      <status-bar></status-bar>
      <stock-header></stock-header>
      <quote-panel></quote-panel>
      <h-share-row></h-share-row>
      <notice-row></notice-row>
      <period-tabs></period-tabs>
      <ma-legend></ma-legend>
      <k-chart></k-chart>
      <turnover-bar></turnover-bar>
      <turnover-chart></turnover-chart>
      <section-tabs></section-tabs>
      <topic-chips></topic-chips>
      <bottom-bar></bottom-bar>
    `;
  }
}
customElements.define('stock-screen', StockScreen);
</script>
</body>
</html>
